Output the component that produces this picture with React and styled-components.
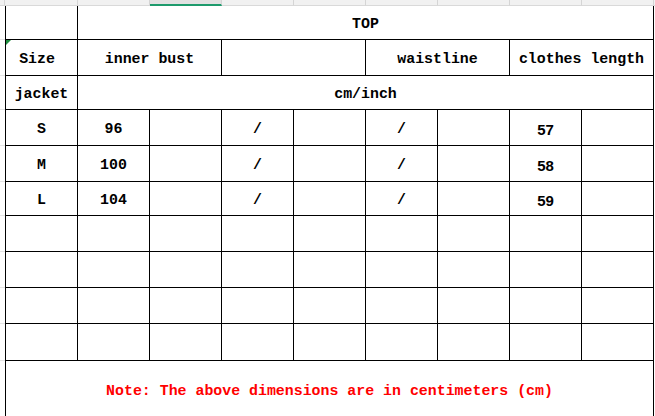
import React from "react";
import styled, { createGlobalStyle } from "styled-components";

const GlobalStyle = createGlobalStyle`
  html, body { margin: 0; padding: 0; background: #ffffff; }
  body { width: 655px; height: 416px; overflow: hidden; }
`;

const COLS = "5px 73px repeat(8, 72px) 2px";
const ROWS = [34, 36, 34, 36, 36, 34, 36, 36, 36, 37, 60];

const Sheet = styled.div`
  display: flex;
  flex-direction: column;
  width: 655px;
`;

const HeaderBar = styled.div`
  display: grid;
  grid-template-columns: ${COLS};
  height: 6px;
  background: #f1f1f1;
`;

const HeaderCell = styled.div`
  box-sizing: border-box;
  height: 6px;
  background: ${(p) => (p.$selected ? "#e1e1e1" : "#f1f1f1")};
  border-right: 1px solid ${(p) => (p.$edge ? "#f1f1f1" : "#d5d5d5")};
  border-bottom: ${(p) => (p.$selected ? "2px solid #1d9a6c" : "1px solid #d9d9d9")};
`;

const Grid = styled.div`
  display: grid;
  grid-template-columns: ${COLS};
  grid-template-rows: ${ROWS.map((r) => r + "px").join(" ")};
`;

const Gutter = styled.div`
  box-sizing: border-box;
  border-bottom: 1px solid #e3e3e3;
  background: #ffffff;
`;

const Cell = styled.div`
  position: relative;
  box-sizing: border-box;
  grid-column: span ${(p) => p.$span || 1};
  display: flex;
  align-items: center;
  justify-content: center;
  padding-top: ${(p) => (p.$red ? 0 : 3)}px;
  padding-right: ${(p) => p.$padRight || 0}px;
  border-right: 1px solid #000000;
  border-bottom: ${(p) => (p.$open ? "none" : "1px solid #000000")};
  border-left: ${(p) => (p.$first ? "1px solid #000000" : "none")};
  font-family: ${(p) =>
    p.$sans ? '"Liberation Sans", Arial, sans-serif' : '"Liberation Mono", "Courier New", monospace'};
  font-weight: bold;
  font-size: ${(p) => (p.$sans ? "15px" : "14.9px")};
  color: ${(p) => (p.$red ? "#ff0000" : "#000000")};
  white-space: nowrap;
`;

const Filler = styled.div``;

const NoteMark = styled.span`
  position: absolute;
  left: 0;
  top: 0;
  width: 0;
  height: 0;
  border-top: 5px solid #1f8f3f;
  border-right: 5px solid transparent;
`;

const sizes = [
  { size: "S", bust: "96", len: "57" },
  { size: "M", bust: "100", len: "58" },
  { size: "L", bust: "104", len: "59" },
];

export default function App() {
  return (
    <Sheet>
      <GlobalStyle />
      <HeaderBar>
        <HeaderCell />
        {Array.from({ length: 9 }).map((_, i) => (
          <HeaderCell key={i} $selected={i === 2} />
        ))}
        <HeaderCell $edge />
      </HeaderBar>
      <Grid>
        <Gutter />
        <Cell $first />
        <Cell $span={8}>TOP</Cell>
        <Filler />

        <Gutter />
        <Cell $first $padRight={9}>
          <NoteMark />
          Size
        </Cell>
        <Cell $span={2}>inner bust</Cell>
        <Cell $span={2} />
        <Cell $span={2}>waistline</Cell>
        <Cell $span={2}>clothes length</Cell>
        <Filler />

        <Gutter />
        <Cell $first>jacket</Cell>
        <Cell $span={8}>cm/inch</Cell>
        <Filler />

        {sizes.map((s) => (
          <React.Fragment key={s.size}>
            <Gutter />
            <Cell $first>{s.size}</Cell>
            <Cell>{s.bust}</Cell>
            <Cell />
            <Cell>/</Cell>
            <Cell />
            <Cell>/</Cell>
            <Cell />
            <Cell $sans>{s.len}</Cell>
            <Cell />
            <Filler />
          </React.Fragment>
        ))}

        {Array.from({ length: 4 }).map((_, r) => (
          <React.Fragment key={"e" + r}>
            <Gutter />
            {Array.from({ length: 9 }).map((__, c) => (
              <Cell key={c} $first={c === 0} />
            ))}
            <Filler />
          </React.Fragment>
        ))}

        <Gutter />
        <Cell $first $span={9} $red $open>
          Note: The above dimensions are in centimeters (cm)
        </Cell>
        <Filler />
      </Grid>
    </Sheet>
  );
}
